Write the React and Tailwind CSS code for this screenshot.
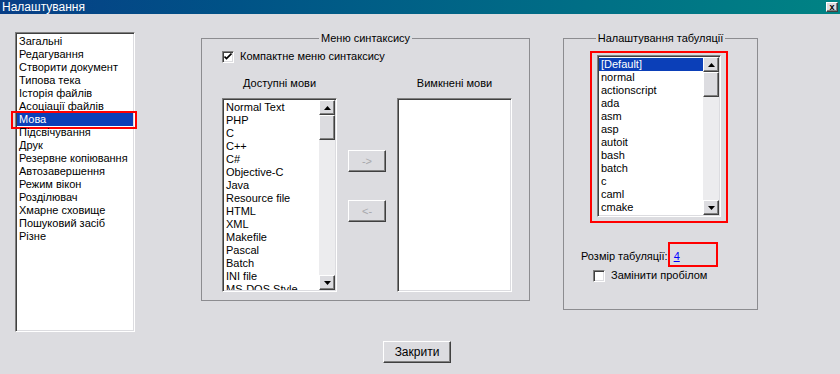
import React from 'react'

const font = { fontFamily: '"Liberation Sans", "DejaVu Sans", sans-serif' }

const pages = [
  'Загальні', 'Редагування', 'Створити документ', 'Типова тека', 'Історія файлів',
  'Асоціації файлів', 'Мова', 'Підсвічування', 'Друк', 'Резервне копіювання',
  'Автозавершення', 'Режим вікон', 'Розділювач', 'Хмарне сховище', 'Пошуковий засіб', 'Різне',
]

const langs = [
  'Normal Text', 'PHP', 'C', 'C++', 'C#', 'Objective-C', 'Java', 'Resource file',
  'HTML', 'XML', 'Makefile', 'Pascal', 'Batch', 'INI file', 'MS-DOS Style',
]

const tabLangs = [
  '[Default]', 'normal', 'actionscript', 'ada', 'asm', 'asp', 'autoit', 'bash',
  'batch', 'c', 'caml', 'cmake', 'cobol',
]

/* raised 3d face */
const raised =
  'bg-[#dcdce0] border border-white border-r-[#404040] border-b-[#404040] shadow-[inset_-1px_-1px_0_#808080]'

/* sunken frame */
const sunken =
  'bg-white border border-[#808080] border-r-white border-b-white shadow-[inset_1px_1px_0_#404040,inset_-1px_-1px_0_#dcdce0]'

function Arrow({ down }) {
  return (
    <svg width="7" height="4" viewBox="0 0 7 4">
      <path d={down ? 'M0 0h7L3.5 4z' : 'M0 4h7L3.5 0z'} fill="#000" />
    </svg>
  )
}

function ScrollBar({ thumbTop = 0 }) {
  return (
    <div className="w-[16px] -mt-[1px] flex flex-col bg-[#ececee] shrink-0">
      <div className={`h-[15px] flex items-center justify-center ${raised}`}>
        <Arrow />
      </div>
      <div className="flex-1 relative">
        <div className={`absolute left-0 right-0 h-[25px] ${raised}`} style={{ top: thumbTop }} />
      </div>
      <div className={`h-[15px] flex items-center justify-center ${raised}`}>
        <Arrow down />
      </div>
    </div>
  )
}

function ListBox({ items, selected = -1, scroll, className = '', marked }) {
  return (
    <div className={`${sunken} px-[1px] pt-[2px] pb-[1px] flex ${marked ? '' : 'overflow-hidden'} ${className}`}>
      <div className={`flex-1 ${marked ? '' : 'overflow-hidden'}`}>
        {items.map((it, i) => (
          <div
            key={it}
            className={`relative h-[13px] leading-[13px] pl-[2px] whitespace-nowrap ${
              i === selected ? 'bg-[#0b3fb8] text-white' : 'text-black'
            }`}
          >
            {it}
            {marked && i === selected && (
              <div className="absolute -left-[6px] -right-[4px] -top-[2px] -bottom-[3px] border-[2px] border-[#ff0000]" />
            )}
          </div>
        ))}
      </div>
      {scroll && <ScrollBar thumbTop={0} />}
    </div>
  )
}

function CheckBox({ checked }) {
  return (
    <div className={`w-[12px] h-[12px] ${sunken} flex items-center justify-center shrink-0`}>
      {checked && (
        <svg width="8" height="8" viewBox="0 0 8 8">
          <path d="M0.5 3.5l2 2 5-5" stroke="#000" strokeWidth="1.6" fill="none" />
        </svg>
      )}
    </div>
  )
}

function Group({ title, className, children }) {
  return (
    <fieldset className={`border border-[#8c8c90] ${className}`}>
      <legend className="mx-auto px-[2px] h-[13px] leading-[13px] text-black">{title}</legend>
      {children}
    </fieldset>
  )
}

export default function App() {
  return (
    <div className="w-[840px] h-[374px] bg-[#dcdce0] flex flex-col overflow-hidden text-[11px] text-black" style={font}>
      {/* title bar */}
      <div className="h-[14px] flex items-center justify-between bg-gradient-to-r from-[#083e86] to-[#008384] pl-[2px] pr-[2px]">
        <span className="text-white text-[12px] leading-[14px]">Налаштування</span>
        <div className={`w-[12px] h-[10px] ${raised} flex items-center justify-center text-[9px] font-bold leading-none`}>
          x
        </div>
      </div>

      <div className="flex items-start">
        {/* pages list */}
        <div className="ml-[15px] mt-[18px]">
          <ListBox items={pages} selected={6} marked className="w-[120px] h-[300px]" />
        </div>

        {/* syntax menu */}
        <Group title="Меню синтаксису" className="ml-[66px] mt-[18px] w-[329px] h-[269px]">
          <div className="pl-[20px] pt-[5px]">
            <div className="flex items-center gap-[6px] h-[13px]">
              <CheckBox checked />
              <span>Компактне меню синтаксису</span>
            </div>
            <div className="flex mt-[14px] h-[13px] leading-[13px]">
              <div className="w-[115px] text-center">Доступні мови</div>
              <div className="w-[60px]" />
              <div className="w-[115px] text-center">Вимкнені мови</div>
            </div>
            <div className="flex mt-[8px]">
              <ListBox items={langs} scroll className="w-[115px] h-[194px]" />
              <div className="mx-[11px] pt-[52px] flex flex-col gap-[28px]">
                <div className={`w-[38px] h-[22px] ${raised} flex items-center justify-center text-[#a8a8ac]`}>-&gt;</div>
                <div className={`w-[38px] h-[22px] ${raised} flex items-center justify-center text-[#a8a8ac]`}>&lt;-</div>
              </div>
              <ListBox items={[]} className="w-[115px] h-[194px]" />
            </div>
          </div>
        </Group>

        {/* tab settings */}
        <Group title="Налаштування табуляції" className="ml-[33px] mt-[18px] w-[195px] h-[278px]">
          <div className="pl-[33px] pt-[10px]">
            <div className="relative w-[124px]">
              <ListBox items={tabLangs} selected={0} scroll className="w-[124px] h-[162px]" />
              <div className="absolute -left-[7px] -top-[4px] -right-[7px] -bottom-[6px] border-[2px] border-[#ff0000]" />
            </div>
          </div>
          <div className="flex items-center mt-[33px] pl-[17px] h-[13px]">
            <span>Розмір табуляції:</span>
            <span className="relative ml-[6px] text-[#0000ff] underline">
              4
              <span className="absolute -left-[6px] -top-[6px] w-[50px] h-[25px] border-[2px] border-[#ff0000]" />
            </span>
          </div>
          <div className="flex items-center gap-[6px] mt-[6px] pl-[29px] h-[13px]">
            <CheckBox />
            <span>Замінити пробілом</span>
          </div>
        </Group>
      </div>

      {/* close button */}
      <div className="mt-[9px] ml-[383px]">
        <div className={`w-[68px] h-[22px] ${raised} flex items-center justify-center text-[12px]`}>Закрити</div>
      </div>
    </div>
  )
}
